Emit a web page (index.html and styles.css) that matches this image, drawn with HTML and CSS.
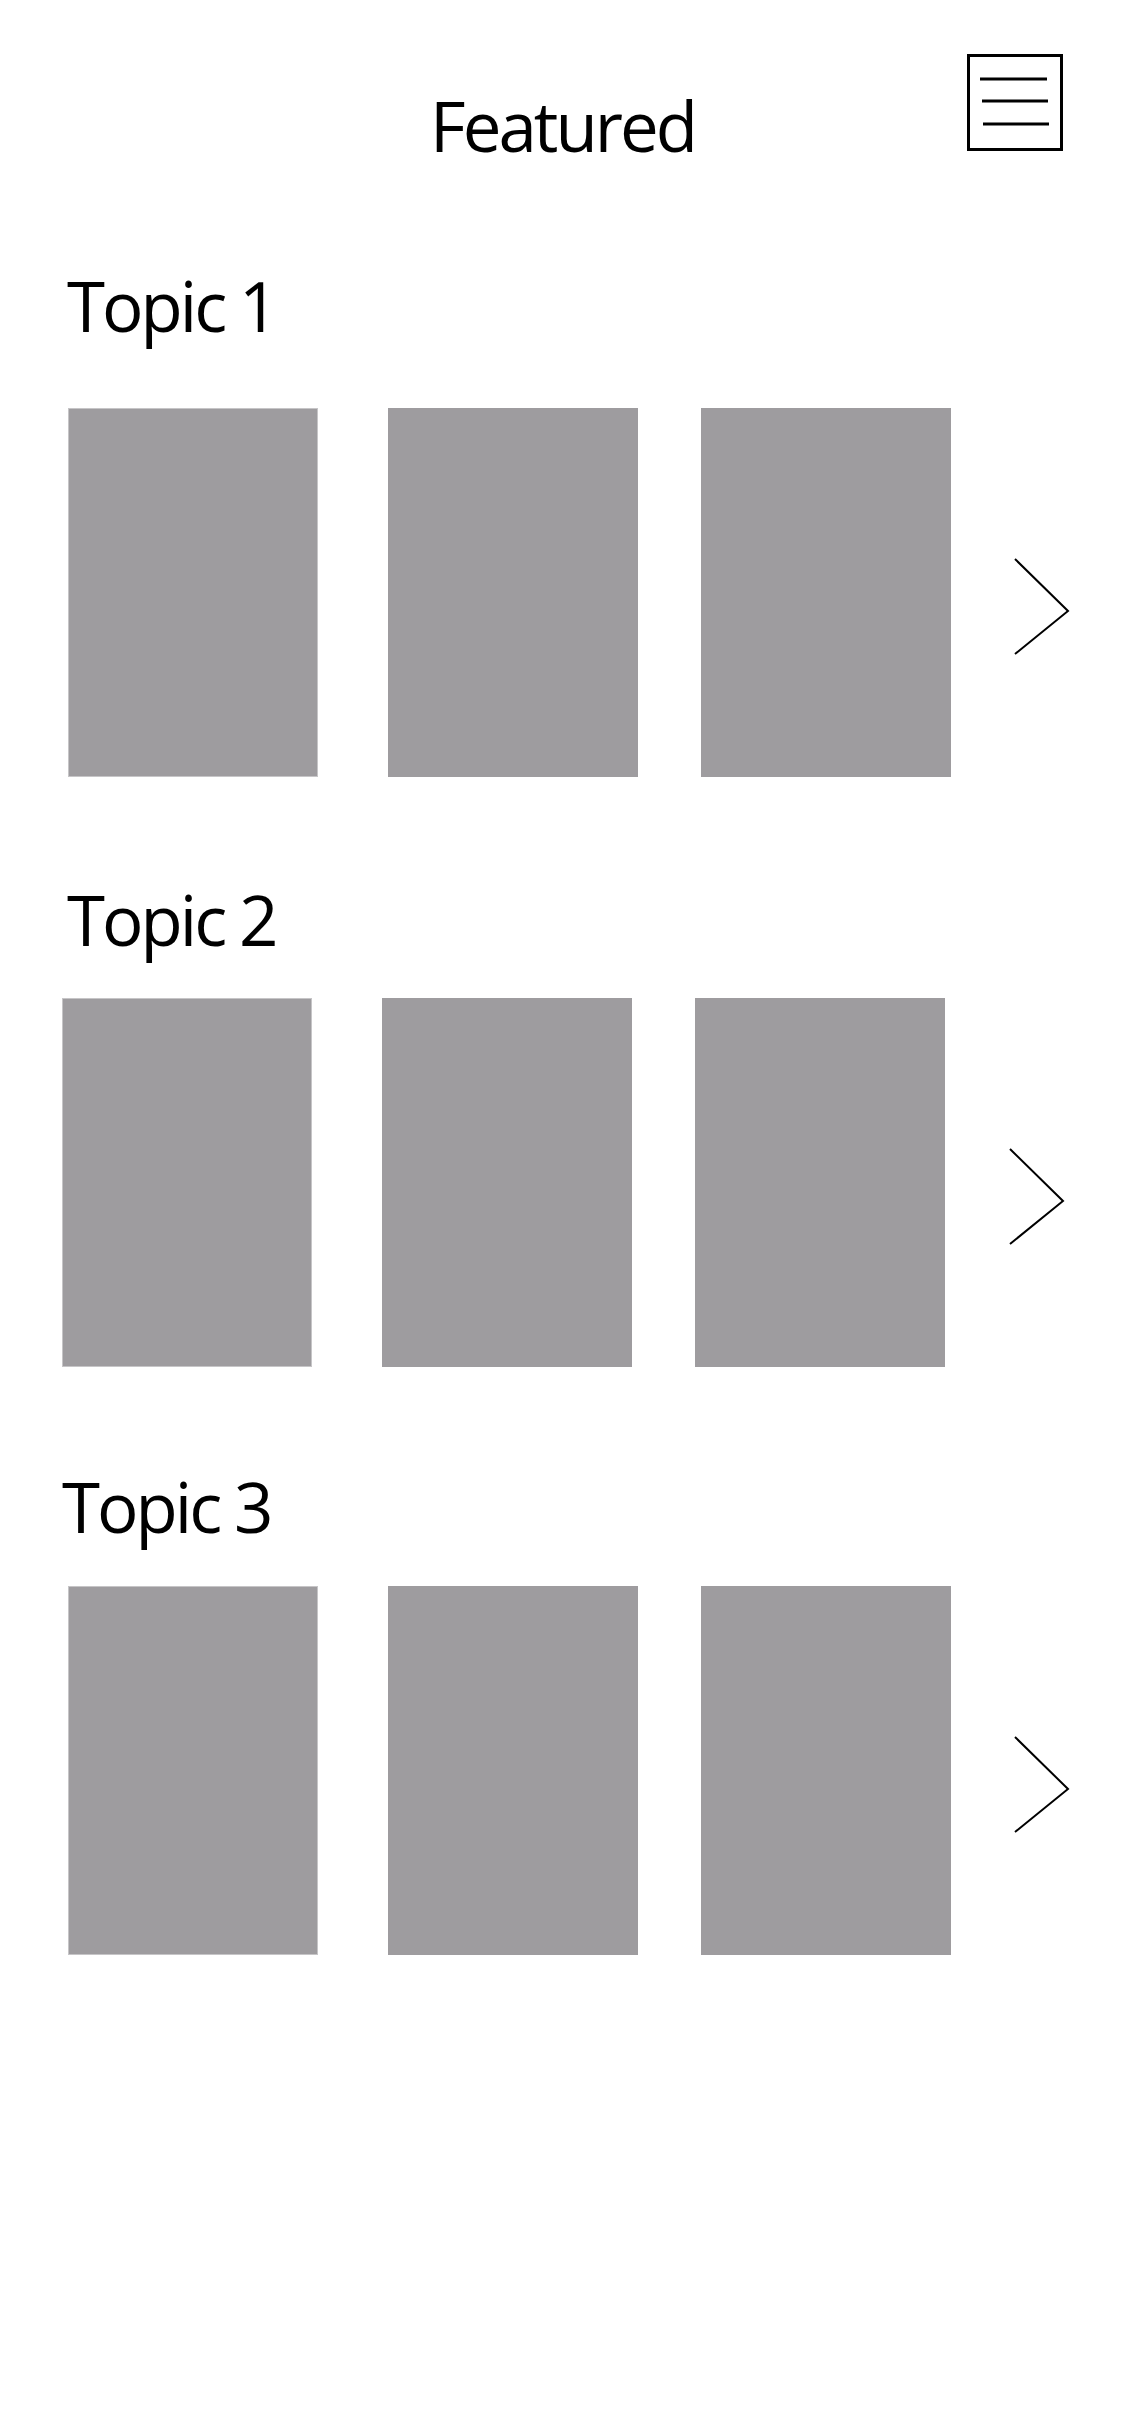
FILE: index.html
```html
<!DOCTYPE html>
<html lang="en">
<head>
<meta charset="utf-8">
<title>Featured</title>
<link rel="stylesheet" href="styles.css">
</head>
<body>
<div class="screen">
  <header class="header">
    <h1 class="header__title">Featured</h1>
    <button class="menu-btn" type="button" aria-label="Menu">
      <svg class="menu-btn__icon" width="96" height="97" viewBox="0 0 96 97">
        <rect x="1.5" y="1.5" width="93" height="94" fill="none" stroke="#000" stroke-width="3"/>
        <line x1="13" y1="25" x2="80" y2="25" stroke="#000" stroke-width="3"/>
        <line x1="15" y1="47" x2="81" y2="47" stroke="#000" stroke-width="3"/>
        <line x1="16" y1="70" x2="82" y2="70" stroke="#000" stroke-width="3"/>
      </svg>
    </button>
  </header>

  <section class="topic topic--1">
    <h2 class="topic__title">Topic 1</h2>
    <div class="topic__row">
      <div class="card card--first"></div>
      <div class="card"></div>
      <div class="card"></div>
      <svg class="chevron" width="56" height="97" viewBox="0 0 56 97">
        <polyline points="1,1 54,53 1,96" fill="none" stroke="#000" stroke-width="2"/>
      </svg>
    </div>
  </section>

  <section class="topic topic--2">
    <h2 class="topic__title">Topic 2</h2>
    <div class="topic__row">
      <div class="card card--first"></div>
      <div class="card"></div>
      <div class="card"></div>
      <svg class="chevron" width="56" height="97" viewBox="0 0 56 97">
        <polyline points="1,1 54,53 1,96" fill="none" stroke="#000" stroke-width="2"/>
      </svg>
    </div>
  </section>

  <section class="topic topic--3">
    <h2 class="topic__title">Topic 3</h2>
    <div class="topic__row">
      <div class="card card--first"></div>
      <div class="card"></div>
      <div class="card"></div>
      <svg class="chevron" width="56" height="97" viewBox="0 0 56 97">
        <polyline points="1,1 54,53 1,96" fill="none" stroke="#000" stroke-width="2"/>
      </svg>
    </div>
  </section>
</div>
</body>
</html>
```

FILE: styles.css
```css
html, body {
  margin: 0;
  padding: 0;
  background: #ffffff;
}

body {
  font-family: "Open Sans", "Noto Sans", sans-serif;
  color: #000;
}

.screen {
  width: 1125px;
  min-height: 2436px;
}

.header {
  display: grid;
  grid-template-columns: 1fr auto 1fr;
  align-items: start;
  padding-top: 54px;
}

.header__title {
  grid-column: 2;
  margin: 37px 0 0;
  font-size: 69px;
  line-height: 69px;
  font-weight: 400;
  letter-spacing: -3px;
}

.menu-btn {
  grid-column: 3;
  justify-self: end;
  margin: 0 62px 0 0;
  padding: 0;
  border: 0;
  background: none;
  width: 96px;
  height: 97px;
}

.menu-btn__icon {
  display: block;
}

.topic__title {
  margin: 0;
  font-size: 69px;
  line-height: 69px;
  font-weight: 400;
  letter-spacing: -3px;
  padding-left: 67px;
}

.topic__row {
  display: flex;
  align-items: flex-start;
  padding-left: 68px;
}

.card {
  width: 250px;
  height: 369px;
  background: #9e9c9f;
  box-sizing: border-box;
}

.card--first {
  border: 1px solid #c6c5c7;
}

.card:nth-child(2) {
  margin-left: 70px;
}

.card:nth-child(3) {
  margin-left: 63px;
}

.chevron {
  display: block;
  margin-left: 63px;
  margin-top: 150px;
}

.topic--1 {
  margin-top: 111px;
}

.topic--1 .topic__row {
  margin-top: 68px;
}

.topic--2 {
  margin-top: 108px;
}

.topic--2 .topic__row {
  margin-top: 44px;
  padding-left: 62px;
}

.topic--2 .chevron {
  margin-left: 64px;
}

.topic--3 {
  margin-top: 105px;
}

.topic--3 .topic__title {
  padding-left: 62px;
}

.topic--3 .topic__row {
  margin-top: 45px;
}
```
